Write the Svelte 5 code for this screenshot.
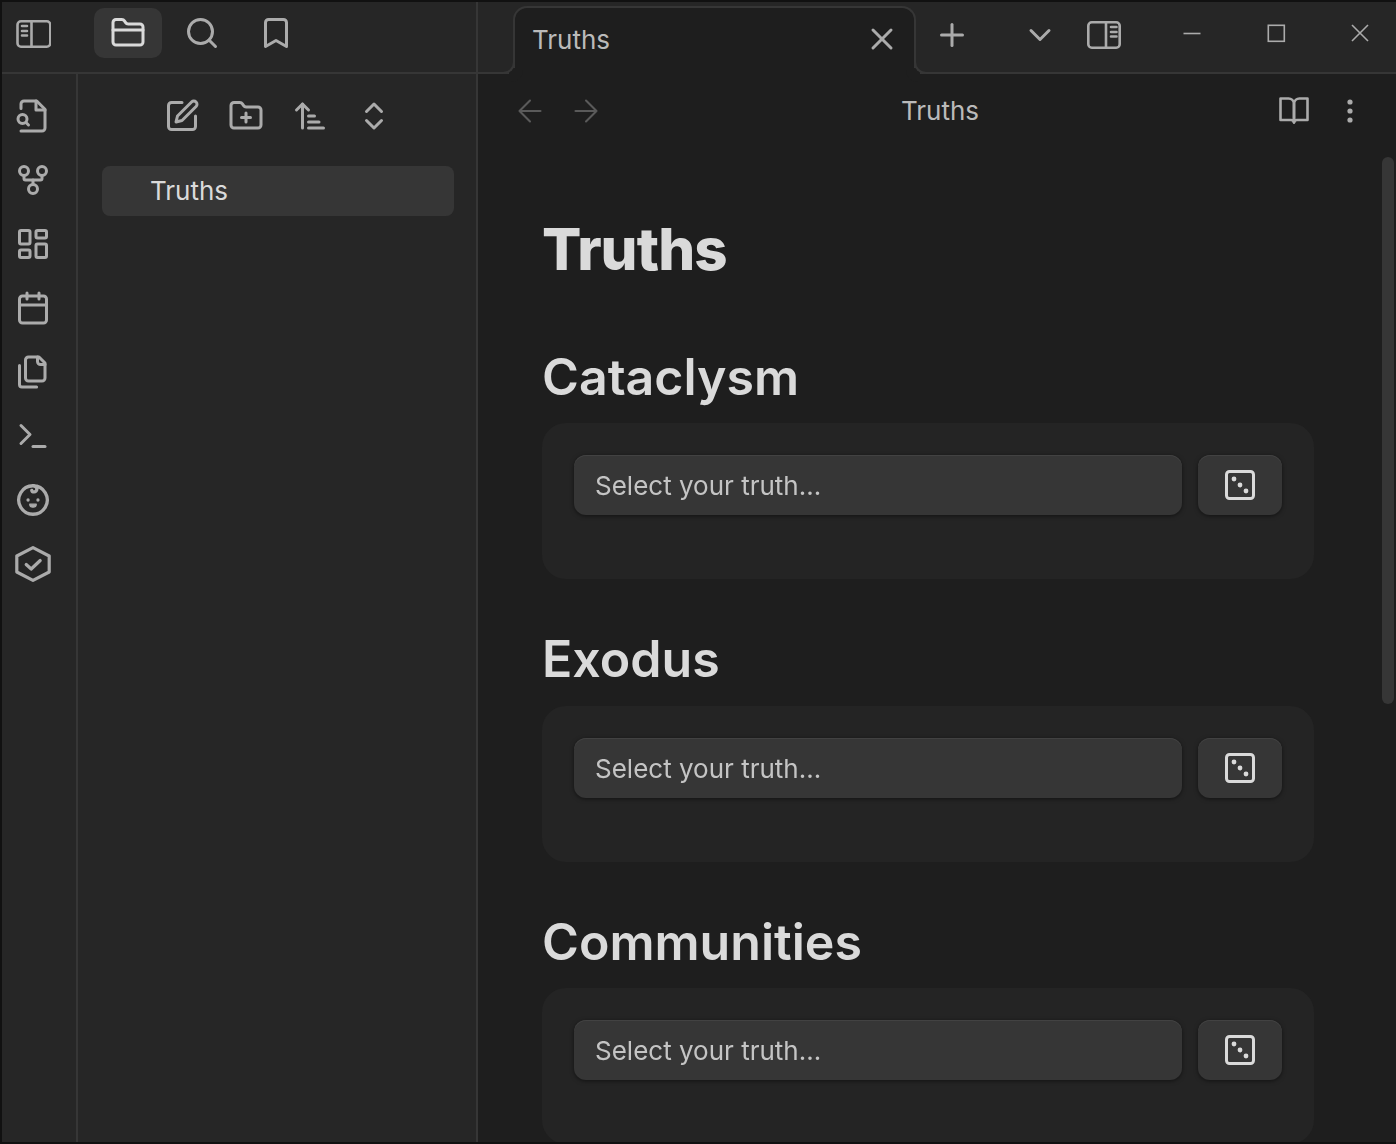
<script>
  const sections = ['Cataclysm', 'Exodus', 'Communities'];
</script>

{#snippet icon(paths, cls = '')}
  <svg class={cls} viewBox="0 0 24 24" fill="none" stroke="currentColor" stroke-width="2" stroke-linecap="round" stroke-linejoin="round">
    {#each paths as d}<path {d} />{/each}
  </svg>
{/snippet}

<div class="win">
  <div class="left">
    <div class="left-top">
      <div class="tb toggle">
        <svg class="ic" viewBox="0 0 36 36" fill="none" stroke="currentColor" stroke-width="2.6" stroke-linecap="round" stroke-linejoin="round">
          <rect x="2.5" y="5.3" width="32.8" height="25.4" rx="3.5" /><path d="M16.5 5.3v25.4M7 10h5M7 15h5M7 19.5h5" />
        </svg>
      </div>
      <div class="tabs-left">
        <div class="tb active">{@render icon(['M20 20a2 2 0 0 0 2-2V8a2 2 0 0 0-2-2h-7.9a2 2 0 0 1-1.69-.9L9.6 3.9A2 2 0 0 0 7.93 3H4a2 2 0 0 0-2 2v13a2 2 0 0 0 2 2Z', 'M2 10h20'], 'ic')}</div>
        <div class="tb">{@render icon(['M21 21l-4.35-4.35', 'M19 11a8 8 0 1 1-16 0 8 8 0 0 1 16 0Z'], 'ic')}</div>
        <div class="tb">{@render icon(['m19 21-7-4-7 4V5a2 2 0 0 1 2-2h10a2 2 0 0 1 2 2v16z'], 'ic')}</div>
      </div>
    </div>
    <div class="left-body">
      <div class="ribbon">
        {@render icon(['M4 22h14a2 2 0 0 0 2-2V7.5L14.5 2H6a2 2 0 0 0-2 2v3', 'M14 2v6h6', 'm9 18-1.5-1.5', 'M8 14a3 3 0 1 1-6 0 3 3 0 0 1 6 0Z'], 'ic')}
        {@render icon(['M15 18a3 3 0 1 1-6 0 3 3 0 0 1 6 0Z', 'M9 6a3 3 0 1 1-6 0 3 3 0 0 1 6 0Z', 'M21 6a3 3 0 1 1-6 0 3 3 0 0 1 6 0Z', 'M18 9v2c0 .6-.4 1-1 1H7c-.6 0-1-.4-1-1V9', 'M12 12v3'], 'ic')}
        <svg class="ic" viewBox="0 0 24 24" fill="none" stroke="currentColor" stroke-width="2" stroke-linejoin="round">
          <rect x="3" y="3" width="7" height="9" rx="1" /><rect x="14" y="3" width="7" height="5" rx="1" /><rect x="14" y="12" width="7" height="9" rx="1" /><rect x="3" y="16" width="7" height="5" rx="1" />
        </svg>
        {@render icon(['M5 4h14a2 2 0 0 1 2 2v14a2 2 0 0 1-2 2H5a2 2 0 0 1-2-2V6a2 2 0 0 1 2-2Z', 'M16 2v4', 'M8 2v4', 'M3 10h18'], 'ic')}
        {@render icon(['M20 7h-3a2 2 0 0 1-2-2V2', 'M9 18a2 2 0 0 1-2-2V4a2 2 0 0 1 2-2h7l4 4v10a2 2 0 0 1-2 2Z', 'M3 7.6v12.8A1.6 1.6 0 0 0 4.6 22h9.8'], 'ic')}
        {@render icon(['M4 17l6-6-6-6', 'M12 19h8'], 'ic')}
        <svg class="ic" viewBox="0 0 24 24" fill="none" stroke="currentColor" stroke-width="2.2" stroke-linecap="round" stroke-linejoin="round">
          <path d="M12 2.5a9.5 9.5 0 1 1-.01 0c1.8 0 2.6 1 2.6 2.1s-.9 2-1.9 2c-.8 0-1.4-.4-1.5-1" />
          <circle cx="8.7" cy="12" r="1.1" fill="currentColor" stroke="none" /><circle cx="15.3" cy="12" r="1.1" fill="currentColor" stroke="none" />
          <path d="M9.8 14.8h4.4a2.2 2 0 0 1-4.4 0z" fill="currentColor" stroke-width="0.8" />
        </svg>
        <svg class="ic" viewBox="0 0 36 36" fill="none" stroke="currentColor" stroke-width="3.2" stroke-linecap="round" stroke-linejoin="round">
          <path d="M18 1.6 34.2 10v16L18 34.4 1.8 26V10Z" /><path d="M11.2 18.5l5 4.5 9-8.5" />
        </svg>
      </div>
      <div class="sidebar">
        <div class="side-tools">
          {@render icon(['M12 3H5a2 2 0 0 0-2 2v14a2 2 0 0 0 2 2h14a2 2 0 0 0 2-2v-7', 'M18.375 2.625a2.121 2.121 0 1 1 3 3L12 15l-4 1 1-4Z'], 'ic')}
          {@render icon(['M12 10v6', 'M9 13h6', 'M20 20a2 2 0 0 0 2-2V8a2 2 0 0 0-2-2h-7.9a2 2 0 0 1-1.69-.9L9.6 3.9A2 2 0 0 0 7.93 3H4a2 2 0 0 0-2 2v13a2 2 0 0 0 2 2Z'], 'ic')}
          {@render icon(['m3 8 4-4 4 4', 'M7 4v16', 'M11 12h4', 'M11 16h7', 'M11 20h10'], 'ic')}
          {@render icon(['m7 15 5 5 5-5', 'm7 9 5-5 5 5'], 'ic')}
        </div>
        <div class="tree-item">Truths</div>
      </div>
    </div>
  </div>

  <div class="main">
    <div class="tabbar">
      <div class="tab">
        <span>Truths</span>
        {@render icon(['M18 6 6 18', 'M6 6l12 12'], 'ic close')}
      </div>
      {@render icon(['M5 12h14', 'M12 5v14'], 'ic plus')}
      <div class="spacer"></div>
      {@render icon(['m6 9 6 6 6-6'], 'ic')}
      <svg class="ic rtoggle" viewBox="0 0 36 36" fill="none" stroke="currentColor" stroke-width="2.6" stroke-linecap="round" stroke-linejoin="round">
        <rect x="2.3" y="5.3" width="31.4" height="25.4" rx="3.5" /><path d="M20 5.3v25.4M25 10h5.5M25 15h5.5M25 19.5h5.5" />
      </svg>
      <div class="winctl">
        <svg viewBox="0 0 84 36" fill="none" stroke="currentColor" stroke-width="1.6"><path d="M33.5 16.5h17" /></svg>
        <svg viewBox="0 0 84 36" fill="none" stroke="currentColor" stroke-width="1.6"><rect x="34.3" y="8.3" width="16" height="16" /></svg>
        <svg viewBox="0 0 84 36" fill="none" stroke="currentColor" stroke-width="1.6"><path d="M34 8l16 16M50 8 34 24" /></svg>
      </div>
    </div>
    <div class="nav">
      <div class="navgroup dim">
        <svg class="ic" viewBox="0 0 24 24" fill="none" stroke="currentColor" stroke-width="1.4" stroke-linecap="round" stroke-linejoin="round"><path d="M19 12H5M12 19l-7-7 7-7" /></svg>
        <svg class="ic" viewBox="0 0 24 24" fill="none" stroke="currentColor" stroke-width="1.4" stroke-linecap="round" stroke-linejoin="round"><path d="M5 12h14M12 5l7 7-7 7" /></svg>
      </div>
      <div class="title">Truths</div>
      <div class="navgroup">
        <svg class="ic" viewBox="0 0 36 36" fill="none" stroke="currentColor" stroke-width="2.6" stroke-linecap="round" stroke-linejoin="round">
          <path d="M4.5 5.5h8a5.5 5.5 0 0 1 5.5 5v19a3 3 0 0 0-2.8-2.5H4.5z" /><path d="M31.5 5.5h-8a5.5 5.5 0 0 0-5.5 5v19a3 3 0 0 1 2.8-2.5h10.7z" />
        </svg>
        <svg class="ic" viewBox="0 0 36 36" fill="currentColor"><circle cx="18" cy="9" r="2.6" /><circle cx="18" cy="18" r="2.6" /><circle cx="18" cy="27" r="2.6" /></svg>
      </div>
    </div>
    <div class="doc">
      <h1>Truths</h1>
      {#each sections as s}
        <h2>{s}</h2>
        <div class="card">
          <div class="select">Select your truth...</div>
          <button aria-label="Roll">
            <svg class="ic dice" viewBox="0 0 24 24" fill="none" stroke="currentColor" stroke-width="2" stroke-linecap="round" stroke-linejoin="round">
              <rect x="3" y="3" width="18" height="18" rx="2" />
              <circle cx="8" cy="8" r="1.6" fill="currentColor" stroke="none" /><circle cx="12" cy="12" r="1.6" fill="currentColor" stroke="none" /><circle cx="16" cy="16" r="1.6" fill="currentColor" stroke="none" />
            </svg>
          </button>
        </div>
      {/each}
      <div class="scroll"></div>
    </div>
  </div>
</div>

<style>
  :global(body) { margin: 0; background: #1e1e1e; }
  .win {
    width: 1396px; height: 1144px; box-sizing: border-box; display: flex; overflow: hidden;
    border-top: 2px solid #111; border-left: 2px solid #111; border-bottom: 2px solid #111;
    font-family: Inter, sans-serif; font-size: 26px; background: #1e1e1e; color: #dadada;
  }
  .win :global(.ic) { width: 36px; height: 36px; display: block; flex: none; color: #ababab; }
  .left { width: 476px; flex: none; box-sizing: border-box; border-right: 2px solid #363636; display: flex; flex-direction: column; background: #262626; }
  .left-top { height: 72px; box-sizing: border-box; border-bottom: 2px solid #363636; display: flex; }
  .tb { width: 68px; height: 50px; margin-top: 6px; border-radius: 10px; display: flex; align-items: center; justify-content: center; }
  .tb.toggle { width: 62px; height: 52px; }
  .tabs-left { display: flex; gap: 6px; margin-left: 30px; }
  .tb.active { background: #363636; }
  .win .tb.active :global(.ic) { color: #dadada; }
  .left-body { flex: 1; display: flex; }
  .ribbon { width: 76px; flex: none; box-sizing: border-box; border-right: 2px solid #363636; padding: 24px 12px 0 0; display: flex; flex-direction: column; align-items: center; gap: 28px; }
  .sidebar { flex: 1; padding: 24px 22px 0 24px; }
  .side-tools { display: flex; justify-content: center; gap: 28px; margin-bottom: 32px; }
  .tree-item { height: 50px; background: #363636; border-radius: 8px; padding-left: 49px; line-height: 50px; color: #dadada; text-indent: -1px; }
  .main { flex: 1; min-width: 0; display: flex; flex-direction: column; }
  .tabbar { height: 72px; flex: none; box-sizing: border-box; background: #262626; border-bottom: 2px solid #363636; display: flex; align-items: center; padding-left: 35px; padding-bottom: 4px; }
  .tab { position: relative; align-self: flex-end; width: 403px; height: 68px; margin-bottom: -6px; box-sizing: border-box; flex: none; background: #1e1e1e; border: 2px solid #363636; border-bottom: none; border-radius: 14px 14px 0 0; display: flex; align-items: center; justify-content: space-between; padding: 0 14px 4px 17px; color: #bababa; }
  .tab::before, .tab::after { content: ''; position: absolute; bottom: 0; width: 14px; height: 14px; box-sizing: border-box; border-bottom: 2px solid #363636; }
  .tab::before { left: -14px; border-right: 2px solid #363636; border-bottom-right-radius: 12px; box-shadow: 8px 8px 0 #1e1e1e; }
  .tab::after { right: -14px; border-left: 2px solid #363636; border-bottom-left-radius: 12px; box-shadow: -8px 8px 0 #1e1e1e; }
  .spacer { flex: 1; }
  .tabbar :global(.plus) { margin-left: 18px; }
  .tabbar :global(.rtoggle) { margin-left: 28px; margin-right: 28px; }
  .winctl { display: flex; width: 246px; flex: none; color: #ababab; overflow: hidden; }
  .winctl svg { width: 84px; height: 36px; flex: none; display: block; }
  .nav { height: 74px; flex: none; display: flex; align-items: center; padding: 0 28px 0 34px; }
  .navgroup { display: flex; gap: 20px; }
  .win .dim :global(.ic) { color: #5a5a5a; }
  .title { flex: 1; text-align: center; color: #bababa; margin-top: -1px; }
  .doc { position: relative; flex: 1; min-height: 0; overflow: hidden; padding: 0 0 0 64px; will-change: transform; }
  h1 { margin: 62px 0 0; font-size: 58.2px; line-height: 78px; height: 86.75px; font-weight: 800; letter-spacing: -0.95px; color: #dadada; }
  h2 { margin: 0; padding-top: 39.2px; font-size: 50.1px; line-height: 82px; height: 87.3px; font-weight: 600; color: #dadada; box-sizing: content-box; }
  .card { width: 772px; height: 156px; box-sizing: border-box; background: #242424; border-radius: 24px; padding: 32px; display: flex; align-items: flex-start; gap: 16px; }
  .select { flex: 1; height: 60px; line-height: 61px; padding-left: 21px; background: #363636; border-radius: 12px; color: #c4c4c4; box-shadow: 0 1px 4px rgba(0,0,0,.5), inset 0 1px 0 #424242; }
  button { width: 84px; height: 60px; border: none; padding: 0; background: #363636; border-radius: 12px; display: flex; align-items: center; justify-content: center; box-shadow: 0 1px 4px rgba(0,0,0,.5), inset 0 1px 0 #424242; }
  .win .dice { color: #dadada; }
  .scroll { position: absolute; left: 904px; top: 9px; width: 12px; height: 547px; border-radius: 6px; background: #363636; }
</style>
